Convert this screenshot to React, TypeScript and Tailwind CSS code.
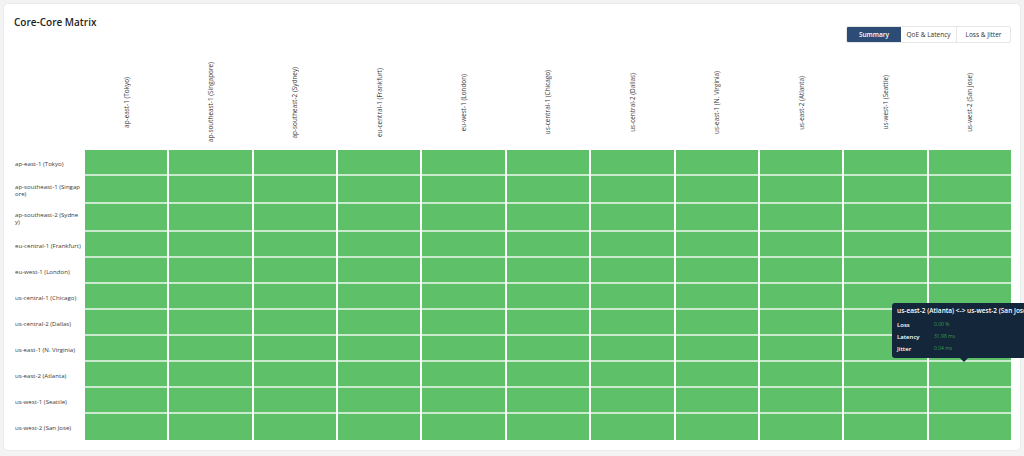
import React from "react";

const regions = [
  "ap-east-1 (Tokyo)",
  "ap-southeast-1 (Singapore)",
  "ap-southeast-2 (Sydney)",
  "eu-central-1 (Frankfurt)",
  "eu-west-1 (London)",
  "us-central-1 (Chicago)",
  "us-central-2 (Dallas)",
  "us-east-1 (N. Virginia)",
  "us-east-2 (Atlanta)",
  "us-west-1 (Seattle)",
  "us-west-2 (San Jose)",
];

const font = { fontFamily: '"Open Sans", "Liberation Sans", sans-serif' };

export default function App() {
  return (
    <div
      className="w-[1024px] h-[456px] overflow-hidden bg-[#f3f3f3] p-[3px]"
      style={font}
    >
      <div className="relative h-[448px] w-[1018px] rounded-[5px] border border-[#ebebeb] bg-white px-[9px] pt-[11px]">
        <div className="flex items-start justify-between pl-[1px]">
          <h1 className="text-[10px] leading-[14px] font-semibold text-[#1f1f1f]">
            Core-Core Matrix
          </h1>
          <div className="mt-[11px] flex h-[17px] overflow-hidden rounded-[2px] border border-[#e6e6e6] text-[6.5px] font-medium">
            <div className="flex w-[54px] items-center justify-center bg-[#2c4c75] text-white font-semibold">
              Summary
            </div>
            <div className="flex w-[56px] items-center justify-center border-r border-[#e6e6e6] text-[#333]">
              QoE &amp; Latency
            </div>
            <div className="flex w-[53px] items-center justify-center text-[#333]">
              Loss &amp; Jitter
            </div>
          </div>
        </div>

        <div className="mt-[12px] grid grid-cols-[70px_repeat(11,minmax(0,1fr))] gap-x-[2px]">
          <div className="h-[95px]" />
          {regions.map((r) => (
            <div key={r} className="flex h-[95px] items-center justify-center">
              <span className="rotate-180 whitespace-nowrap text-[6.4px] leading-[7px] text-[#3a3a3a] [writing-mode:vertical-rl]">
                {r}
              </span>
            </div>
          ))}
          {regions.map((row, ri) => (
            <React.Fragment key={row}>
              <div
                className={`flex items-center pl-[2px] text-[6.1px] leading-[7px] text-[#3a3a3a] break-all ${
                  ri === 1 || ri === 2 ? "h-[28px]" : "h-[26px]"
                }`}
              >
                {row}
              </div>
              {regions.map((c) => (
                <div
                  key={c}
                  className={`bg-[#5ec16a] ${
                    ri < regions.length - 1 ? "border-b-2 border-[#c9eacc]" : ""
                  } ${ri === 1 || ri === 2 ? "h-[28px]" : "h-[26px]"}`}
                />
              ))}
            </React.Fragment>
          ))}
        </div>

        <div className="absolute left-[888px] top-[299px] w-[150px] rounded-[3px] bg-[#13263a] px-[5px] pt-[4px] pb-[5px] text-white">
          <div className="whitespace-nowrap text-[6.5px] font-semibold leading-[8px]">
            us-east-2 (Atlanta) &lt;-&gt; us-west-2 (San Jose)
          </div>
          <div className="mt-[6px] flex flex-col gap-[4px]">
            {[
              ["Loss", "0.00 %"],
              ["Latency", "31.98 ms"],
              ["Jitter", "0.04 ms"],
            ].map(([k, v]) => (
              <div key={k} className="flex h-[8px] items-center">
                <span className="w-[37px] text-[6px] font-semibold">{k}</span>
                <span className="text-[5px] text-[#3f9a4b]">{v}</span>
              </div>
            ))}
          </div>
          <div className="absolute left-[68px] bottom-[-4px] h-0 w-0 border-x-[4px] border-t-[4px] border-x-transparent border-t-[#13263a]" />
        </div>
      </div>
    </div>
  );
}
